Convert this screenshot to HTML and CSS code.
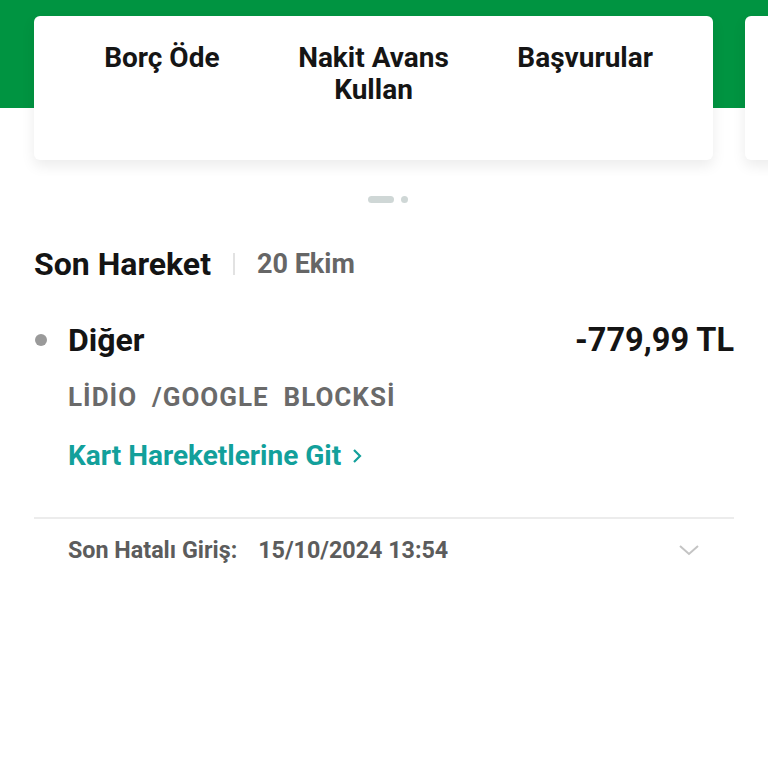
FILE: index.html
```html
<!DOCTYPE html>
<html lang="tr">
<head>
<meta charset="utf-8">
<link rel="stylesheet" href="styles.css">
</head>
<body>
<div class="screen">
  <div class="hero">
    <div class="carousel">
      <div class="card">
        <div class="action">Borç Öde</div>
        <div class="action">Nakit Avans Kullan</div>
        <div class="action">Başvurular</div>
      </div>
      <div class="card card-peek"></div>
    </div>
  </div>
  <div class="pager">
    <span class="pill"></span>
    <span class="dot"></span>
  </div>
  <section class="recent">
    <div class="recent-head">
      <h2 class="title">Son Hareket</h2>
      <span class="sep"></span>
      <span class="date">20 Ekim</span>
    </div>
    <div class="tx">
      <span class="bullet"></span>
      <span class="tx-name">Diğer</span>
      <span class="tx-amount">-779,99 TL</span>
    </div>
    <div class="tx-desc">LİDİO  /GOOGLE  BLOCKSİ</div>
    <a class="link">Kart Hareketlerine Git
      <svg class="link-chev" width="12" height="18" viewBox="0 0 12 18"><path d="M3 3 L9 9 L3 15" fill="none" stroke="#12a09b" stroke-width="2.2"/></svg>
    </a>
  </section>
  <div class="login">
    <span class="login-label">Son Hatalı Giriş:</span>
    <span class="login-value">15/10/2024 13:54</span>
    <svg class="login-chev" width="22" height="14" viewBox="0 0 22 14"><path d="M2 3 L11 11 L20 3" fill="none" stroke="#c4c4c4" stroke-width="2"/></svg>
  </div>
</div>
</body>
</html>
```
FILE: styles.css
```css
* { box-sizing: border-box; }
html, body { margin: 0; padding: 0; background: #fff; }
body { font-family: Roboto, "Noto Sans", "Liberation Sans", sans-serif; width: 768px; height: 768px; overflow: hidden; }
.screen { width: 768px; }
.hero {
  background: linear-gradient(#009441 0, #009441 108px, #fff 108px);
  padding-top: 16px;
  overflow: hidden;
}
.carousel { display: flex; gap: 32px; padding-left: 34px; }
.card {
  flex: 0 0 679px;
  height: 144px;
  background: #fff;
  border-radius: 6px;
  box-shadow: 0 6px 14px rgba(0,0,0,0.08);
  display: grid;
  grid-template-columns: repeat(3, 1fr);
  padding: 26px 22px 0;
  margin-bottom: 16px;
}
.card-peek { flex: 0 0 40px; display: block; }
.action {
  text-align: center;
  font-weight: 700;
  font-size: 28px;
  line-height: 32px;
  color: #151515;
  padding: 0 8px;
}
.pager { display: flex; justify-content: center; align-items: center; gap: 7px; height: 6px; margin-top: 20px; padding-left: 7px; }
.pill { width: 26px; height: 7px; border-radius: 4px; background: #cfd7d6; }
.dot { width: 7px; height: 7px; border-radius: 50%; background: #cfd7d6; }
.recent { padding: 0 34px; margin-top: 42px; }
.recent-head { display: flex; align-items: center; height: 40px; }
.title { margin: 0; font-size: 32px; font-weight: 700; color: #141414; }
.sep { width: 2px; height: 22px; background: #e2e2e2; margin: 0 22px; }
.date { font-size: 27px; font-weight: 700; color: #666; }
.tx { display: flex; align-items: center; margin-top: 36px; height: 40px; }
.bullet { width: 12px; height: 12px; border-radius: 50%; background: #9a9a9a; margin-left: 1px; margin-right: 21px; }
.tx-name { font-size: 32px; font-weight: 700; color: #141414; }
.tx-amount { margin-left: auto; font-size: 32.5px; font-weight: 700; color: #141414; }
.tx-desc { white-space: pre; margin: 22px 0 0 34px; font-size: 26px; letter-spacing: 1px; font-weight: 700; color: #6a6a6a; line-height: 30px; }
.link { display: flex; align-items: center; gap: 10px; margin: 28px 0 0 34px; font-size: 28px; font-weight: 700; color: #12a09b; line-height: 32px; }
.login {
  margin: 45px 34px 0;
  border-top: 2px solid #ececec;
  display: flex;
  align-items: center;
  padding: 14px 34px 0;
  height: 50px;
  font-size: 23.3px;
  font-weight: 700;
  color: #5c5c5c;
}
.login-value { margin-left: 21px; }
.login-chev { margin-left: auto; margin-right: 0; }
```
